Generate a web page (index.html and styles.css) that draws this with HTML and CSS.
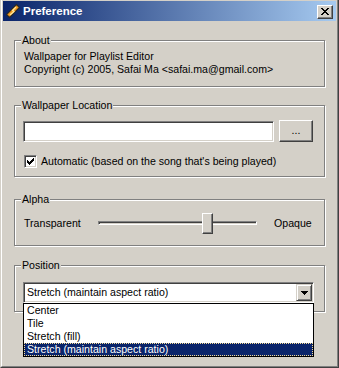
FILE: index.html
```html
<!DOCTYPE html>
<html>
<head>
<meta charset="utf-8">
<title>Preference</title>
<link rel="stylesheet" href="styles.css">
</head>
<body>
<div class="window">
  <div class="frame">
    <div class="titlebar">
      <svg class="app-icon" width="16" height="16" viewBox="0 0 16 16">
        <path d="M11.5 1.5 L14.5 4.5 L4.5 14.5 L1.5 11.5 Z" fill="#F39A1E" stroke="#2A2A2A" stroke-width="1.2" stroke-linejoin="round"/>
        <path d="M11 4 L7.5 7.5 L9 8.5 L5 12" fill="none" stroke="#FFE9A0" stroke-width="1.2"/>
      </svg>
      <span class="title">Preference</span>
      <button class="close-btn" type="button">
        <svg width="8" height="7" viewBox="0 0 8 7" shape-rendering="crispEdges">
          <rect x="0" y="0" width="2" height="1"/><rect x="6" y="0" width="2" height="1"/>
          <rect x="1" y="1" width="2" height="1"/><rect x="5" y="1" width="2" height="1"/>
          <rect x="2" y="2" width="4" height="1"/>
          <rect x="3" y="3" width="2" height="1"/>
          <rect x="2" y="4" width="4" height="1"/>
          <rect x="1" y="5" width="2" height="1"/><rect x="5" y="5" width="2" height="1"/>
          <rect x="0" y="6" width="2" height="1"/><rect x="6" y="6" width="2" height="1"/>
        </svg>
      </button>
    </div>
    <div class="content">
      <section class="group group-about">
        <div class="legend">About</div>
        <p class="about-text">Wallpaper for Playlist Editor<br>Copyright (c) 2005, Safai Ma &lt;safai.ma@gmail.com&gt;</p>
      </section>

      <section class="group group-location">
        <div class="legend">Wallpaper Location</div>
        <div class="path-row">
          <div class="textbox"></div>
          <button class="push-btn" type="button">...</button>
        </div>
        <label class="check-row">
          <span class="checkbox">
            <svg width="7" height="7" viewBox="0 0 7 7" shape-rendering="crispEdges">
              <rect x="6" y="0" width="1" height="1"/>
              <rect x="5" y="1" width="2" height="1"/>
              <rect x="0" y="2" width="1" height="1"/><rect x="4" y="2" width="3" height="1"/>
              <rect x="0" y="3" width="2" height="1"/><rect x="3" y="3" width="3" height="1"/>
              <rect x="0" y="4" width="5" height="1"/>
              <rect x="1" y="5" width="3" height="1"/>
              <rect x="2" y="6" width="1" height="1"/>
            </svg>
          </span>
          <span class="check-label">Automatic (based on the song that's being played)</span>
        </label>
      </section>

      <section class="group group-alpha">
        <div class="legend">Alpha</div>
        <div class="slider-row">
          <span class="slider-label">Transparent</span>
          <div class="slider">
            <div class="track"></div>
            <div class="thumb" style="left: 104px"></div>
          </div>
          <span class="slider-label slider-label-end">Opaque</span>
        </div>
      </section>

      <section class="group group-position">
        <div class="legend">Position</div>
        <div class="combo">
          <span class="combo-value">Stretch (maintain aspect ratio)</span>
          <span class="combo-btn">
            <svg width="7" height="4" viewBox="0 0 7 4" shape-rendering="crispEdges">
              <rect x="0" y="0" width="7" height="1"/>
              <rect x="1" y="1" width="5" height="1"/>
              <rect x="2" y="2" width="3" height="1"/>
              <rect x="3" y="3" width="1" height="1"/>
            </svg>
          </span>
          <ul class="combo-list">
            <li>Center</li>
            <li>Tile</li>
            <li>Stretch (fill)</li>
            <li class="selected">Stretch (maintain aspect ratio)</li>
          </ul>
        </div>
      </section>
    </div>
  </div>
</div>
</body>
</html>
```

FILE: styles.css
```css
html, body {
  margin: 0;
  padding: 0;
  background: #D4D0C8;
}

body {
  font-family: "Liberation Sans", Arial, sans-serif;
  font-size: 10.6px;
  line-height: 13px;
  color: #000;
}

.window {
  width: 339px;
  height: 368px;
  box-sizing: border-box;
  border-left: 1px solid #D4D0C8;
  border-right: 1px solid #404040;
  border-bottom: 1px solid #404040;
}

.frame {
  height: 100%;
  box-sizing: border-box;
  border-left: 1px solid #FFFFFF;
  border-right: 1px solid #808080;
  border-bottom: 1px solid #808080;
  padding: 1px 1px 0 1px;
}

.titlebar {
  height: 20px;
  display: flex;
  align-items: center;
  padding: 0 3px 0 2px;
  background: linear-gradient(to right, #0A246A, #A6CAF0);
}

.app-icon {
  display: block;
  flex: none;
  margin-right: 2px;
}

.title {
  flex: 1;
  color: #FFFFFF;
  font-weight: bold;
  font-size: 11.5px;
}

.close-btn {
  width: 16px;
  height: 14px;
  margin: 1px 0 0 0;
  padding: 0;
  box-sizing: border-box;
  display: flex;
  align-items: center;
  justify-content: center;
  background: #D4D0C8;
  border: 1px solid;
  border-color: #FFFFFF #404040 #404040 #FFFFFF;
  box-shadow: inset -1px -1px #808080;
}

.close-btn svg {
  display: block;
  margin: 0 1px 1px 0;
}

.content {
  display: flex;
  flex-direction: column;
  padding: 0 11px;
}

.group {
  box-sizing: border-box;
  border: 1px solid #808080;
  box-shadow: inset 1px 1px #FFFFFF, 1px 1px #FFFFFF;
  padding: 0 8px;
}

.legend {
  width: fit-content;
  margin: -7px 0 0 -2px;
  padding: 0 1px;
  background: #D4D0C8;
}

.group-about {
  margin-top: 19px;
  height: 47px;
}

.about-text {
  margin: 3px 0 0 0;
  padding-left: 1px;
}

.group-location {
  margin-top: 18px;
  height: 72px;
}

.path-row {
  display: flex;
  align-items: flex-start;
  margin-top: 8px;
}

.textbox {
  width: 251px;
  height: 21px;
  margin-top: 1px;
  box-sizing: border-box;
  background: #FFFFFF;
  border: 1px solid;
  border-color: #808080 #FFFFFF #FFFFFF #808080;
  box-shadow: inset 1px 1px #404040, inset -1px -1px #D4D0C8;
}

.push-btn {
  width: 34px;
  height: 22px;
  margin-left: 5px;
  padding: 0 0 2px 0;
  box-sizing: border-box;
  font: inherit;
  color: #000;
  background: #D4D0C8;
  border: 1px solid;
  border-color: #FFFFFF #404040 #404040 #FFFFFF;
  box-shadow: inset -1px -1px #808080;
}

.check-row {
  display: flex;
  align-items: center;
  margin-top: 13px;
  height: 13px;
}

.checkbox {
  width: 13px;
  height: 13px;
  margin-left: 1px;
  box-sizing: border-box;
  display: flex;
  align-items: center;
  justify-content: center;
  background: #FFFFFF;
  border: 1px solid;
  border-color: #808080 #FFFFFF #FFFFFF #808080;
  box-shadow: inset 1px 1px #404040, inset -1px -1px #D4D0C8;
}

.checkbox svg {
  display: block;
}

.check-label {
  margin-left: 4px;
}

.group-alpha {
  margin-top: 22px;
  height: 47px;
}

.slider-row {
  display: grid;
  grid-template-columns: 75px 159px 1fr;
  align-items: center;
  margin-top: 7px;
  height: 21px;
}

.slider-label {
  padding-left: 1px;
}

.slider-label-end {
  padding-left: 17px;
}

.slider {
  position: relative;
  height: 21px;
}

.track {
  height: 4px;
  margin-top: 8px;
  box-sizing: border-box;
  border: 1px solid;
  border-color: #808080 #FFFFFF #FFFFFF #808080;
  box-shadow: inset 1px 1px #404040, inset -1px -1px #D4D0C8;
}

.thumb {
  position: absolute;
  top: 0;
  width: 11px;
  height: 21px;
  box-sizing: border-box;
  background: #D4D0C8;
  border: 1px solid;
  border-color: #FFFFFF #404040 #404040 #FFFFFF;
  box-shadow: inset -1px -1px #808080;
}

.group-position {
  margin-top: 19px;
  height: 47px;
}

.combo {
  position: relative;
  display: flex;
  align-items: center;
  width: 291px;
  height: 21px;
  margin-top: 10px;
  box-sizing: border-box;
  background: #FFFFFF;
  border: 1px solid;
  border-color: #808080 #FFFFFF #FFFFFF #808080;
  box-shadow: inset 1px 1px #404040, inset -1px -1px #D4D0C8;
  padding: 1px;
}

.combo-value {
  flex: 1;
  padding-left: 2px;
}

.combo-btn {
  width: 16px;
  height: 17px;
  box-sizing: border-box;
  display: flex;
  align-items: center;
  justify-content: center;
  background: #D4D0C8;
  border: 1px solid;
  border-color: #D4D0C8 #404040 #404040 #D4D0C8;
  box-shadow: inset 1px 1px #FFFFFF, inset -1px -1px #808080;
}

.combo-btn svg {
  display: block;
  margin-top: 1px;
}

.combo-list {
  position: absolute;
  top: 100%;
  left: -1px;
  width: 291px;
  box-sizing: border-box;
  margin: 1px 0 0 0;
  padding: 0;
  list-style: none;
  background: #FFFFFF;
  border: 1px solid #000000;
}

.combo-list li {
  height: 13px;
  line-height: 13px;
  padding-left: 3px;
}

.combo-list li.selected {
  background: #0A246A;
  color: #FFFFFF;
  outline: 1px dotted #F5DB95;
  outline-offset: -1px;
}
```
